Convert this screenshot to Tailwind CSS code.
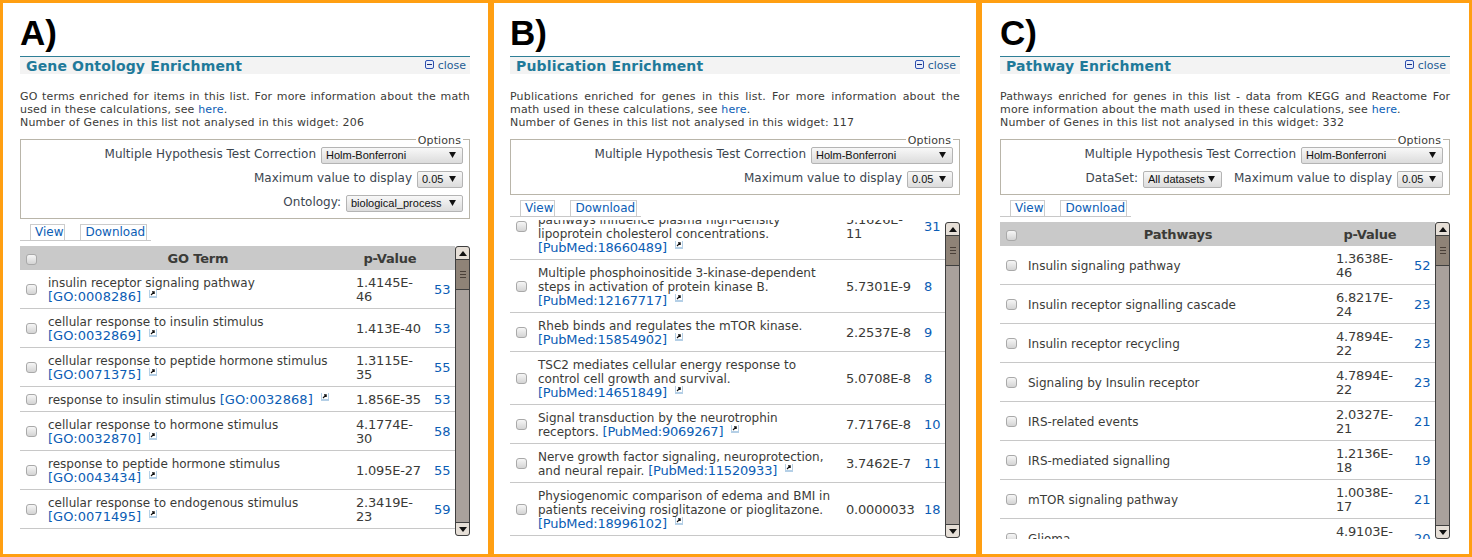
<!DOCTYPE html>
<html lang="en">
<head>
  <meta charset="UTF-8" />
  <title>List Enrichment Widgets</title>
  <script src="https://cdn.jsdelivr.net/npm/@tailwindcss/browser@4"></script>
</head>
<body class="bg-[#ff9f12] h-[557px] overflow-hidden font-['DejaVu_Sans',sans-serif] text-[#3b3b38]">
  <div id="panels" class="flex pt-[3px] pl-[3px] h-[554px]"></div>

  <script>
    const panels = [
      {
        letter: 'A)', title: 'Gene Ontology Enrichment', box: 'w-[485px] mr-[6px] pl-[17px] pr-[18px]',
        intro: 'GO terms enriched for items in this list. For more information about the math used in these calculations, see',
        missing: 206, col: 'GO Term', listBox: 'h-[290px]', listTop: '', offset: '',
        options: [
          [['Multiple Hypothesis Test Correction', 'Holm-Bonferroni', 'w-[142px]']],
          [['Maximum value to display', '0.05', 'w-[46px]']],
          [['Ontology:', 'biological_process', 'w-[117px]']]
        ],
        rows: [
          ['insulin receptor signaling pathway [GO:0008286]', '1.4145E-46', 53],
          ['cellular response to insulin stimulus [GO:0032869]', '1.413E-40', 53],
          ['cellular response to peptide hormone stimulus [GO:0071375]', '1.3115E-35', 55],
          ['response to insulin stimulus [GO:0032868]', '1.856E-35', 53],
          ['cellular response to hormone stimulus [GO:0032870]', '4.1774E-30', 58],
          ['response to peptide hormone stimulus [GO:0043434]', '1.095E-27', 55],
          ['cellular response to endogenous stimulus [GO:0071495]', '2.3419E-23', 59]
        ]
      },
      {
        letter: 'B)', title: 'Publication Enrichment', box: 'w-[482px] mr-[6px] pl-[16px] pr-[16px]',
        intro: 'Publications enriched for genes in this list. For more information about the math used in these calculations, see',
        missing: 117, listBox: 'h-[316px]', listTop: '-mt-[2px]', offset: '-mt-[27px]',
        options: [
          [['Multiple Hypothesis Test Correction', 'Holm-Bonferroni', 'w-[142px]']],
          [['Maximum value to display', '0.05', 'w-[46px]']]
        ],
        rows: [
          ['Variants in insulin signaling genes and<br>pathways influence plasma high-density lipoprotein cholesterol concentrations. [PubMed:18660489]', '5.1626E-11', 31],
          ['Multiple phosphoinositide 3-kinase-dependent steps in activation of protein kinase B. [PubMed:12167717]', '5.7301E-9', 8],
          ['Rheb binds and regulates the mTOR kinase. [PubMed:15854902]', '2.2537E-8', 9],
          ['TSC2 mediates cellular energy response to control cell growth and survival. [PubMed:14651849]', '5.0708E-8', 8],
          ['Signal transduction by the neurotrophin receptors. [PubMed:9069267]', '7.7176E-8', 10],
          ['Nerve growth factor signaling, neuroprotection, and neural repair. [PubMed:11520933]', '3.7462E-7', 11],
          ['Physiogenomic comparison of edema and BMI in patients receiving rosiglitazone or pioglitazone. [PubMed:18996102]', '0.0000033', 18]
        ]
      },
      {
        letter: 'C)', title: 'Pathway Enrichment', box: 'w-[487px] pl-[18px] pr-[19px]',
        intro: '<span class="tracking-[0.04px]">Pathways enriched for genes in this list - data from KEGG and Reactome For</span> more information about the math used in these calculations, see',
        missing: 332, col: 'Pathways', listBox: 'h-[317px]', listTop: '', offset: '',
        options: [
          [['Multiple Hypothesis Test Correction', 'Holm-Bonferroni', 'w-[142px]']],
          [['DataSet:', 'All datasets', 'w-[79px]'], ['Maximum value to display', '0.05', 'w-[46px]']]
        ],
        rows: [
          ['Insulin signaling pathway', '1.3638E-46', 52],
          ['Insulin receptor signalling cascade', '6.8217E-24', 23],
          ['Insulin receptor recycling', '4.7894E-22', 23],
          ['Signaling by Insulin receptor', '4.7894E-22', 23],
          ['IRS-related events', '2.0327E-21', 21],
          ['IRS-mediated signalling', '1.2136E-18', 19],
          ['mTOR signaling pathway', '1.0038E-17', 21],
          ['Glioma', '4.9103E-17', 20]
        ]
      }
    ];

    const checkbox = `<input type="checkbox" class="appearance-none block w-[11px] h-[11px] -mt-[2px] rounded-[3px] border border-[#a9a9a9] bg-linear-to-b from-[#f6f6f6] to-[#d4d4d4]" />`;

    const extLink = `<svg viewBox="0 0 8 8" class="inline-block relative -top-[3px] w-[8px] h-[8px] ml-[8px] align-baseline"><rect width="8" height="8" fill="#b4cfe6"/><rect x="1" y="0" width="6" height="6" fill="#fff"/><path d="M2 5 L5 2 M3 1.8 H5.2 V4" fill="none" stroke="#111" stroke-width="1.1"/></svg>`;

    function optionRow(fields) {
      return `<div class="flex justify-end items-start gap-[12px] h-[17px]">` + fields.map(([label, value, width]) => `
        <label class="flex items-start gap-[5px] text-[12px] leading-[14px] text-[#3c4650]">${label}
          <span class="relative block ${width}">
            <select class="appearance-none block w-full h-[17px] pl-[4px] pb-[2px] rounded-[2px] border border-[#b4b4b4] bg-linear-to-b from-[#f8f8f8] to-[#dcdcdc] font-['Liberation_Sans',sans-serif] text-[11px] leading-[14px] text-[#111]"><option>${value}</option></select>
            <svg viewBox="0 0 8 7" class="absolute right-[7px] top-[5px] w-[7px] h-[6px] pointer-events-none"><path d="M0 0 H8 L4 7 Z" fill="#111"/></svg>
          </span>
        </label>`).join('') + `</div>`;
    }

    function row([text, pValue, count]) {
      // the accession link at the end of a term is blue, the rest plain
      const linked = text.replace(/\[[^\]]+\]/, m => {
        const spacing = m.startsWith('[GO') ? 'tracking-[0.05px]' : 'tracking-[-0.2px]';
        return `<a href="#" class="text-[13px] ${spacing} text-[#0b5db5]">${m}</a>${extLink}`;
      });
      return `
        <div class="grid grid-cols-[28px_308px_78px_1fr] items-center pt-[6px] pb-[4px] border-b border-[#c8c8c8] text-[12px] leading-[14px]">
          <div class="pl-[6px]">${checkbox}</div>
          <div class="pr-[14px]">${linked}</div>
          <div class="pr-[8px] text-[13px] tracking-[-0.2px]">${pValue}</div>
          <a href="#" class="text-[13px] tracking-[-0.1px] text-[#0b5db5]">${count}</a>
        </div>`;
    }

    function scrollbar() {
      return `
        <div class="flex flex-col w-[15px] shrink-0 rounded-[3px] border border-[#3f3f3f] bg-[#a9a19c]">
          <div class="h-[13px] border-b border-[#3f3f3f] bg-[#e6dfd7] flex items-center justify-center rounded-t-[3px]"><svg viewBox="0 0 8 5" class="w-[8px] h-[5px]"><path d="M0 5 H8 L4 0 Z" fill="#111"/></svg></div>
          <div class="h-[30px] border-b border-[#3f3f3f] bg-[#8f8377] flex flex-col items-center justify-center gap-[2px]"><i class="block w-[6px] h-px bg-[#4a4038]"></i><i class="block w-[6px] h-px bg-[#4a4038]"></i><i class="block w-[6px] h-px bg-[#4a4038]"></i></div>
          <div class="flex-1"></div>
          <div class="h-[13px] border-t border-[#3f3f3f] bg-[#e6dfd7] flex items-center justify-center rounded-b-[3px]"><svg viewBox="0 0 8 5" class="w-[8px] h-[5px]"><path d="M0 0 H8 L4 5 Z" fill="#111"/></svg></div>
        </div>`;
    }

    function panel(p) {
      const header = p.col ? `
        <div class="grid grid-cols-[28px_300px_84px_1fr] items-center h-[24px] bg-[#c9c9c9] font-bold text-[13px] tracking-[-0.2px] leading-[26px]">
          <div class="pl-[6px] pt-[2px]">${checkbox}</div>
          <div class="text-center">${p.col}</div>
          <div class="text-center">p-Value</div>
        </div>` : '';
      return `
        <section class="bg-white h-[551px] overflow-hidden pt-[9px] ${p.box}">
          <h1 class="font-['Liberation_Sans',sans-serif] font-bold text-[35px] leading-[42px] mb-[2px] text-black">${p.letter}</h1>
          <div class="flex justify-between h-[18px] border-t border-[#2f7f97] bg-[#f3f3f3] pl-[6px] pr-[4px]">
            <h2 class="font-bold text-[14px] leading-[19px] tracking-[0.16px] text-[#1f7a9a]">${p.title}</h2>
            <a href="#" class="flex items-center gap-[4px] text-[11px] leading-[19px] text-[#1f5c94]">
              <svg viewBox="0 0 9 9" class="w-[9px] h-[9px] -mt-[2px]"><rect x=".5" y=".5" width="8" height="8" rx="1.5" fill="#e9eefa" stroke="#2c4fb0"/><path d="M2 4.5 H7" stroke="#1a2f7a"/></svg>close
            </a>
          </div>
          <p class="mt-[16px] text-[11px] leading-[13px] tracking-[0.17px] text-justify">${p.intro} <a href="#" class="text-[#0b5db5]">here</a>.<br />Number of Genes in this list not analysed in this widget: ${p.missing}</p>
          <fieldset class="mt-[3px] border border-[#b9b5a9] pl-[7px] pr-[6px] pb-[6px]">
            <legend class="ml-auto px-[2px] h-[14px] text-[11px] leading-[17px] tracking-[0.1px]">Options</legend>
            <div class="flex flex-col gap-[7px] mt-px">${p.options.map(optionRow).join('')}</div>
          </fieldset>
          <div class="flex gap-[15px] w-[131px] h-[17px] mt-[5px] pl-[10px] border-b border-[#c8c8c8] text-[12px] leading-[15px]">
            <a href="#" class="h-[16px] pl-[4px] pr-px border border-b-0 border-[#cccccc] text-[#0b5db5]">View</a>
            <a href="#" class="h-[16px] pl-[4px] pr-px border border-b-0 border-[#cccccc] text-[#0b5db5]">Download</a>
          </div>
          <div class="flex mt-[5px] ${p.listBox}">
            <div class="w-[435px] overflow-hidden ${p.listTop}">${header}<div class="${p.offset}">${p.rows.map(row).join('')}</div></div>
            ${scrollbar()}
          </div>
        </section>`;
    }

    document.getElementById('panels').innerHTML = panels.map(panel).join('');
  </script>
</body>
</html>
